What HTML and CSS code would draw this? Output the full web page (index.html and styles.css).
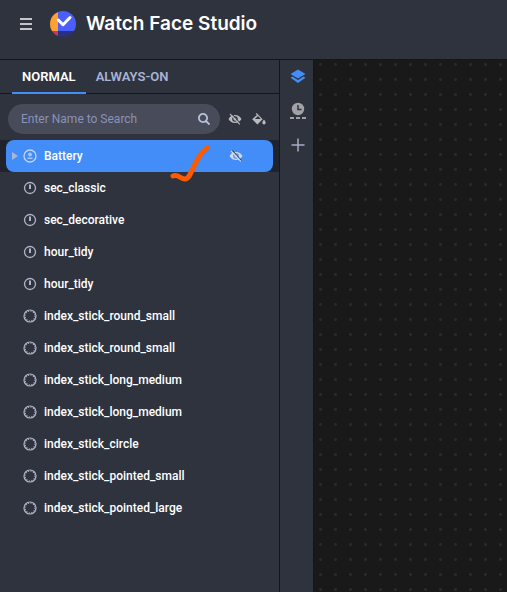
FILE: index.html
```
<!DOCTYPE html>
<html lang="en">
<head>
<meta charset="utf-8">
<meta name="viewport" content="width=device-width, initial-scale=1">
<title>Watch Face Studio</title>
<link rel="stylesheet" href="styles.css">
</head>
<body>
<svg class="sprites" aria-hidden="true">
  <symbol id="eye-off" viewBox="0 0 14 12">
    <path fill="currentColor" fill-rule="evenodd" d="M.5 6C2 3.300 4.300 2 7 2s5 1.300 6.500 4C12 8.700 9.700 10 7 10S2 8.700.5 6zM7 3.200a2.800 2.800 0 1 0 0 5.600 2.800 2.800 0 0 0 0-5.600zM7 4.500a1.500 1.500 0 1 1 0 3 1.500 1.500 0 0 1 0-3z"/>
    <path class="slash-gap" d="M3.300.4l9.200 10"/>
    <path stroke="currentColor" stroke-width="1.200" d="M2 .8l9.800 10.600"/>
  </symbol>
  <symbol id="hand" viewBox="0 0 14 14">
    <circle cx="7" cy="7" r="5.500" fill="none" stroke="currentColor" stroke-width="1.300"/>
    <path stroke="currentColor" stroke-width="2" d="M7 3.500v4.500"/>
  </symbol>
  <symbol id="index" viewBox="0 0 14 14">
    <circle cx="7" cy="7" r="6" fill="none" stroke="currentColor" stroke-width="1.200"/>
    <circle cx="7" cy="7" r="5" fill="none" stroke="currentColor" stroke-width="1.300" stroke-dasharray="1 1.618"/>
  </symbol>
  <symbol id="battery" viewBox="0 0 14 14">
    <circle cx="7" cy="7" r="6" fill="none" stroke="currentColor" stroke-width="1.300"/>
    <circle cx="7" cy="5.500" r="1.900" fill="currentColor" opacity=".8"/>
    <path fill="currentColor" opacity=".8" d="M4.500 8.500h5V10h-5z"/>
  </symbol>
</svg>
<header class="header">
  <button class="menu" aria-label="Menu"><span></span><span></span><span></span></button>
  <svg class="logo" viewBox="0 0 26 26" aria-hidden="true">
    <clipPath id="disc"><circle cx="13" cy="13" r="13"/></clipPath>
    <g clip-path="url(#disc)">
      <path fill="#4b5efa" d="M8 0h18v20H8z"/>
      <path fill="#ffa033" d="M0 0h8v20H0z"/>
      <path fill="#c43764" d="M0 20h8v6H0z"/>
      <path fill="#293080" d="M8 20h18v6H8z"/>
    </g>
    <path fill="none" stroke="#fff" stroke-width="3" stroke-linecap="round" stroke-linejoin="round" d="M8.300 9l4.700 4.700L20 6.500"/>
  </svg>
  <h1 class="title">Watch Face Studio</h1>
</header>
<main class="workspace">
  <aside class="panel">
    <nav class="tabs">
      <button class="tab active">NORMAL</button>
      <button class="tab">ALWAYS-ON</button>
    </nav>
    <div class="tools">
      <div class="search">
        <input id="search" type="text" placeholder="Enter Name to Search" aria-label="Enter Name to Search">
        <svg class="search-icon" viewBox="0 0 12 12" aria-hidden="true"><path fill="none" stroke="currentColor" stroke-width="1.800" d="M5 .9a4.100 4.100 0 1 0 0 8.200A4.100 4.100 0 0 0 5 .9zM8 8l3.600 3.600"/></svg>
      </div>
      <button class="tool" aria-label="Hide layers"><svg class="eye"><use href="#eye-off"/></svg></button>
      <button class="tool" aria-label="Fill color"><svg class="bucket" viewBox="0 0 14 12"><path fill="currentColor" fill-rule="evenodd" d="M3.600.8L4.600 0l6 6.200-5.200 5.200L.2 6.200 5 1.900zM6 2.900L2.900 6H8.800zM12 6.600c1 1.400 1.700 2.200 1.700 3.100a1.700 1.700 0 0 1-3.400 0c0-.9.700-1.700 1.700-3.100z"/></svg></button>
    </div>
    <ul class="layers">
      <li class="row selected">
        <div class="card">
          <svg class="arrow" viewBox="0 0 6 8" aria-hidden="true"><path fill="currentColor" d="M0 0l6 4-6 4z"/></svg>
          <svg class="kind"><use href="#battery"/></svg>
          <span class="name">Battery</span>
          <button class="tool" aria-label="Hide Battery"><svg class="eye"><use href="#eye-off"/></svg></button>
        </div>
        <svg class="mark" viewBox="0 0 42 38" aria-hidden="true"><path fill="none" stroke="#ff5a00" stroke-width="5" stroke-linecap="round" stroke-linejoin="round" d="M4 31c5-2 8 3 12 3 7 0 8-21 22-31"/></svg>
      </li>
      <li class="row"><svg class="kind"><use href="#hand"/></svg><span class="name">sec_classic</span></li>
      <li class="row"><svg class="kind"><use href="#hand"/></svg><span class="name">sec_decorative</span></li>
      <li class="row"><svg class="kind"><use href="#hand"/></svg><span class="name">hour_tidy</span></li>
      <li class="row"><svg class="kind"><use href="#hand"/></svg><span class="name">hour_tidy</span></li>
      <li class="row"><svg class="kind"><use href="#index"/></svg><span class="name">index_stick_round_small</span></li>
      <li class="row"><svg class="kind"><use href="#index"/></svg><span class="name">index_stick_round_small</span></li>
      <li class="row"><svg class="kind"><use href="#index"/></svg><span class="name">index_stick_long_medium</span></li>
      <li class="row"><svg class="kind"><use href="#index"/></svg><span class="name">index_stick_long_medium</span></li>
      <li class="row"><svg class="kind"><use href="#index"/></svg><span class="name">index_stick_circle</span></li>
      <li class="row"><svg class="kind"><use href="#index"/></svg><span class="name">index_stick_pointed_small</span></li>
      <li class="row"><svg class="kind"><use href="#index"/></svg><span class="name">index_stick_pointed_large</span></li>
    </ul>
  </aside>
  <nav class="rail">
    <button class="rail-button current" aria-label="Layers"><svg viewBox="0 0 16 16"><path fill="currentColor" d="M8 .5l7.500 4.500L8 9.500.5 5zM.5 8.700l2-1.100L8 10.900l5.500-3.300 2 1.100L8 14z"/></svg></button>
    <button class="rail-button" aria-label="Timeline"><svg viewBox="0 0 16 18"><circle cx="8" cy="7" r="6.200" fill="#a1a2a7"/><path fill="none" stroke="#2f333e" stroke-width="1.500" d="M8 3v4.500h3.500"/><path stroke="#a1a2a7" stroke-width="2" stroke-dasharray="4 2" d="M0 16h16"/></svg></button>
    <button class="rail-button" aria-label="Add"><svg viewBox="0 0 16 16"><path stroke="#a9adc4" stroke-width="1.500" d="M8 1.500v13M1.500 8h13"/></svg></button>
  </nav>
  <section class="canvas" aria-label="Canvas"></section>
</main>
</body>
</html>
```
FILE: styles.css
```
* { box-sizing: border-box; }

body {
  margin: 0;
  min-height: 100vh;
  display: flex;
  flex-direction: column;
  background: #2f333e;
  color: #fff;
  font-family: Roboto, "Liberation Sans", sans-serif;
  font-size: 12px;
}

button {
  padding: 0;
  border: 0;
  background: none;
  color: inherit;
  font: inherit;
}

svg { display: block; flex: none; }

.sprites { position: absolute; width: 0; height: 0; }

.slash-gap { stroke: #2f333e; stroke-width: 1; }

.header {
  display: flex;
  align-items: center;
  height: 60px;
  padding: 0 20px 12px;
  border-bottom: 1px solid #14161b;
}

.menu {
  display: flex;
  flex-direction: column;
  gap: 3px;
  width: 12px;
  margin-right: 18px;
}

.menu span { height: 2px; background: #c4c5ca; }

.logo { width: 26px; height: 26px; }

.title {
  margin: 0 0 0 10px;
  font-family: Inter, "Liberation Sans", sans-serif;
  font-size: 19px;
  font-weight: 600;
  line-height: 24px;
  white-space: nowrap;
}

.workspace {
  flex: 1;
  display: grid;
  grid-template-columns: 280px 34px 1fr;
}

.panel { border-right: 1px solid #14161b; }

.tabs {
  display: flex;
  height: 34px;
  padding-left: 12px;
  border-bottom: 1px solid #14161b;
}

.tab {
  height: 34px;
  padding: 0 10px;
  border-bottom: 2px solid transparent;
  color: #a9b4d4;
  font-size: 13px;
  font-weight: 600;
}

.tab.active { border-color: #428df7; color: #fff; }

.tools {
  display: flex;
  align-items: center;
  gap: 10px;
  padding: 10px 13px 6px 8px;
}

.search {
  flex: 1;
  display: flex;
  align-items: center;
  height: 30px;
  margin-right: -2px;
  padding: 0 10px 0 13px;
  border-radius: 15px;
  background: #484b59;
}

.search input {
  flex: 1;
  min-width: 0;
  padding: 0;
  border: 0;
  outline: 0;
  background: none;
  color: #fff;
  font: inherit;
}

.search input::placeholder { color: #8992b8; opacity: 1; }

.search-icon { width: 12px; height: 12px; color: #b9c0dc; }

.tool { color: #b9babe; }

.eye { width: 14px; height: 12px; }

.bucket { width: 14px; height: 12px; }

.layers { margin: 0; padding: 0; list-style: none; }

.row {
  display: flex;
  align-items: center;
  gap: 7px;
  height: 32px;
  padding-left: 23px;
  font-weight: 500;
}

.kind { width: 14px; height: 14px; color: #b0b3c8; }

.row.selected { position: relative; padding: 0 6px; background: #20222c; }

.card {
  flex: 1;
  display: flex;
  align-items: center;
  gap: 7px;
  height: 32px;
  padding: 0 30px 0 6px;
  border-radius: 8px;
  background: #428df7;
}

.card .kind { margin-left: -2px; color: #c3d3f5; }

.card .name { flex: 1; }

.card .tool { color: #d0d9eb; }

.card .slash-gap { stroke: #428df7; }

.arrow { width: 6px; height: 8px; color: #aab6d5; }

.mark {
  position: absolute;
  top: 5px;
  left: 169px;
  width: 42px;
  height: 38px;
}

.rail {
  display: flex;
  flex-direction: column;
  align-items: center;
  gap: 17px;
  padding: 9px 0 0 2px;
  border-right: 1px solid #14161b;
}

.rail-button svg { width: 16px; height: 16px; }

.rail-button:nth-child(2) svg { height: 18px; }

.current { color: #428df7; }

.canvas {
  background-color: #191919;
  background-image: radial-gradient(circle, #2a2a2a 1px, transparent 2px);
  background-size: 15px 15px;
  background-position: -1px -3px;
}
```
